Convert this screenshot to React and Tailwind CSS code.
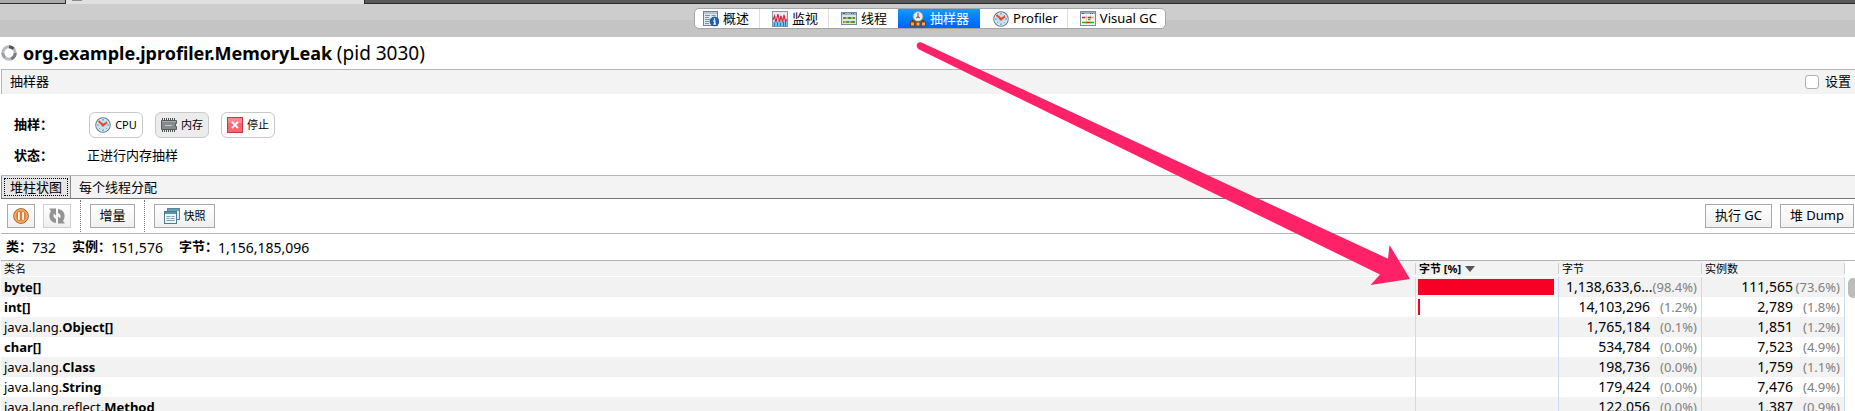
import React from "react";

const FONT = "font-['Noto_Sans','Noto_Sans_CJK_SC',sans-serif]";

function OverviewIcon() {
  return (
    <svg width="16" height="16" viewBox="0 0 16 16" aria-hidden="true">
      <rect x="0.5" y="0.5" width="14" height="14" fill="#dfe9f1" stroke="#6f8290" />
      <rect x="1" y="1" width="13" height="2" fill="#b4c6d4" />
      <path d="M2 4.5h5M8.500 4.500h4M2 6.500h4M2 8.500h5M2 10.500h4M2 12.500h4" stroke="#7c919f" />
      <circle cx="11.500" cy="10.500" r="4.500" fill="#1d5fa8" stroke="#0f4484" strokeWidth="0.6" />
      <path d="M11.500 7.300v1.500M10.300 10h1.500v3M10.300 13.200h2.800" stroke="#fff" strokeWidth="1.300" fill="none" />
    </svg>
  );
}

function MonitorIcon() {
  return (
    <svg width="16" height="16" viewBox="0 0 16 16" aria-hidden="true">
      <rect x="0.5" y="0.5" width="15" height="15" fill="#e6edf2" stroke="#8597a3" />
      <path d="M1 11l2-2 2 2 2-3 2 3 2-2 2 2 2-2v6H1z" fill="#6cc4ee" />
      <path d="M1 9l1.500-4 1.500 6 2-8 1.500 8 1.500-6 1.500 6 1.500-7 1.500 7 1.500-3" fill="none" stroke="#e02844" strokeWidth="1.200" />
      <path d="M2.500 15v-3M5.500 15v-4M8.500 15v-3M11.500 15v-4M13.500 15v-3" stroke="#1d7fb8" />
    </svg>
  );
}

function ThreadsIcon({ visual = false }) {
  return (
    <svg width="16" height="16" viewBox="0 0 16 16" aria-hidden="true">
      <rect x="0.5" y={visual ? 0.5 : 1.5} width="15" height={visual ? 14 : 12} fill={visual ? "#f7f8f3" : "#dce6e8"} stroke="#778c98" />
      <rect x="1" y={visual ? 1 : 2} width="14" height="2" fill="#9db1bf" />
      <path d="M2 2.500h2M10 2.500h1M12 2.500h1" stroke="#49606f" />
      {visual ? (
        <>
          <path d="M2 6.500h12M2 11.500h12M6.500 4v9M10.500 4v9" stroke="#d3d8cc" />
          <path d="M2 6.500h3M8 6.500h3M6 11.500h4" stroke="#d6202c" strokeWidth="1.300" />
          <path d="M5 6.500h3M11 6.500h3" stroke="#efc21d" strokeWidth="1.300" />
          <path d="M2 11.500h4M10 11.500h4M8 8.500h2" stroke="#18bb22" strokeWidth="1.500" />
        </>
      ) : (
        <>
          <path d="M2 7h12" stroke="#3c9b4a" strokeWidth="2" />
          <path d="M2 11h12" stroke="#4aa356" strokeWidth="2" />
          <path d="M5 7h2M10 7h2M3 11h2M8 11h2" stroke="#e0a22a" strokeWidth="2" />
          <path d="M8 7h1M12 11h1" stroke="#c8323c" strokeWidth="2" />
        </>
      )}
    </svg>
  );
}

function SamplerIcon() {
  return (
    <svg width="16" height="16" viewBox="0 0 16 16" aria-hidden="true">
      <path d="M8 9v3M2.500 12V9.500h11V12" stroke="#7a3f0c" strokeWidth="1.500" fill="none" />
      <circle cx="8" cy="5.500" r="4.900" fill="#e4f1f8" stroke="#8aa0ae" />
      <path d="M8 2v3.500M8 5.500L6.300 7.200M8 5.500l1.700 1.700" stroke="#c9482f" strokeWidth="1.200" fill="none" />
      <g fill="#f4a963" stroke="#7a3f0c">
        <rect x="0.5" y="11" width="4" height="4" />
        <rect x="6" y="11" width="4" height="4" />
        <rect x="11.500" y="11" width="4" height="4" />
      </g>
    </svg>
  );
}

function ClockIcon() {
  return (
    <svg width="16" height="16" viewBox="0 0 16 16" aria-hidden="true">
      <circle cx="8" cy="8" r="7.200" fill="#bfe3f6" stroke="#667985" strokeWidth="1.200" />
      <circle cx="8" cy="8" r="6.200" fill="none" stroke="#f1f8fc" strokeWidth="0.8" />
      <path d="M8 2v1.500M8 12.500V14M2 8h1.500M12.500 8H14M3.800 12.200l.8-.8M11.400 11.400l.8.8M11.400 4.600l.8-.8" stroke="#486476" strokeWidth="0.900" />
      <path d="M3.500 4L8 8 12 5.500" fill="none" stroke="#f4431f" strokeWidth="1.900" />
      <circle cx="8" cy="8" r="1.600" fill="#f4431f" />
    </svg>
  );
}

function MemoryIcon() {
  return (
    <svg width="16" height="16" viewBox="0 0 16 16" aria-hidden="true">
      <path d="M1.500 1v14M3.500 1v14M5.500 1v14M7.500 1v14M9.500 1v14M11.500 1v14M13.500 1v14" stroke="#4f4f4f" />
      <path d="M.5 3.500h15v3h-1v3h1v3H.5z" fill="#858a8c" stroke="#565b5d" />
      <path d="M1 4.500h14" stroke="#a7acad" />
      <path d="M4 8.500h7" stroke="#c5cacb" />
    </svg>
  );
}

function StopIcon() {
  return (
    <svg width="16" height="16" viewBox="0 0 16 16" aria-hidden="true">
      <rect x="0.5" y="0.5" width="15" height="15" fill="#fb6572" stroke="#c93443" />
      <rect x="1" y="1" width="14" height="5" fill="#fd8791" />
      <path d="M5 5l6 6M11 5l-6 6" stroke="#fff" strokeWidth="1.800" />
    </svg>
  );
}

function PauseIcon() {
  return (
    <svg width="16" height="16" viewBox="0 0 16 16" aria-hidden="true">
      <circle cx="8" cy="8" r="7.400" fill="#f2872a" stroke="#9c5a2a" strokeWidth="0.900" />
      <circle cx="8" cy="8" r="6.200" fill="none" stroke="#fbc48c" />
      <rect x="4.600" y="3.600" width="2.600" height="8.800" rx="0.500" fill="#fff" stroke="#b9651f" strokeWidth="0.700" />
      <rect x="8.800" y="3.600" width="2.600" height="8.800" rx="0.500" fill="#fff" stroke="#b9651f" strokeWidth="0.700" />
    </svg>
  );
}

function RefreshIcon() {
  return (
    <svg width="18" height="16" viewBox="0 0 18 16" aria-hidden="true" fill="#939393">
      <path d="M1 .5h7v7L6 5.800C4.800 8 5.500 10 8 11v4C2 14.500-.5 8.500 3 3z" />
      <path d="M1 .5h7v7L6 5.800C4.800 8 5.500 10 8 11v4C2 14.500-.5 8.500 3 3z" transform="rotate(180 9 8)" />
    </svg>
  );
}

function SnapshotIcon() {
  return (
    <svg width="16" height="16" viewBox="0 0 16 16" aria-hidden="true">
      <rect x="3.500" y="0.500" width="12" height="11" fill="#dcecf3" stroke="#5b8398" />
      <rect x="4" y="1" width="11" height="2" fill="#6c9eb6" />
      <rect x="0.500" y="3.500" width="12" height="12" fill="#edf6fa" stroke="#4f7b92" />
      <rect x="1" y="4" width="11" height="2" fill="#5b93ae" />
      <path d="M2.500 8.500h4M7.500 8.500h3M2.500 10.500h3M6.500 10.500h4M2.500 12.500h8" stroke="#7ba0b2" />
    </svg>
  );
}

function LoadingIcon() {
  return (
    <svg width="16" height="16" viewBox="0 0 16 16" aria-hidden="true" fill="none" strokeWidth="3">
      <circle cx="8" cy="8" r="6.200" stroke="#b9bbc0" />
      <path d="M8 1.800a6.200 6.200 0 0 1 4.500 2" stroke="#4d535d" />
      <path d="M14.200 8a6.200 6.200 0 0 1-4 5.800" stroke="#777c85" />
      <path d="M4 12.700A6.200 6.200 0 0 1 1.800 8" stroke="#9da0a6" />
    </svg>
  );
}

const views = [
  { label: "概述", icon: <OverviewIcon />, box: "pl-2 pr-[10px] border-r border-[#dedede]" },
  { label: "监视", icon: <MonitorIcon />, box: "pl-3 pr-[10px] border-r border-[#dedede]" },
  { label: "线程", icon: <ThreadsIcon />, box: "pl-3 pr-[11px]" },
  { label: "抽样器", icon: <SamplerIcon />, box: "pl-3 pr-[11px] bg-linear-to-b from-[#1a97ff] to-[#0062ff] text-white", selected: true },
  { label: "Profiler", icon: <ClockIcon />, box: "pl-[13px] pr-[9px] border-r border-[#dedede]" },
  { label: "Visual GC", icon: <ThreadsIcon visual />, box: "pl-3 pr-2" },
];

const rows = [
  { pkg: "", name: "byte[]", bar: 136, bytes: "1,138,633,6...", bytesPct: "(98.4%)", count: "111,565", countPct: "(73.6%)", clipped: true },
  { pkg: "", name: "int[]", bar: 2, bytes: "14,103,296", bytesPct: "(1.2%)", count: "2,789", countPct: "(1.8%)" },
  { pkg: "java.lang.", name: "Object[]", bar: 0, bytes: "1,765,184", bytesPct: "(0.1%)", count: "1,851", countPct: "(1.2%)" },
  { pkg: "", name: "char[]", bar: 0, bytes: "534,784", bytesPct: "(0.0%)", count: "7,523", countPct: "(4.9%)" },
  { pkg: "java.lang.", name: "Class", bar: 0, bytes: "198,736", bytesPct: "(0.0%)", count: "1,759", countPct: "(1.1%)" },
  { pkg: "java.lang.", name: "String", bar: 0, bytes: "179,424", bytesPct: "(0.0%)", count: "7,476", countPct: "(4.9%)" },
  { pkg: "java.lang.reflect.", name: "Method", bar: 0, bytes: "122,056", bytesPct: "(0.0%)", count: "1,387", countPct: "(0.9%)" },
];

function RoundButton({ icon, children, pressed }) {
  return (
    <button
      type="button"
      aria-pressed={pressed}
      className={`flex h-[26px] w-[54px] items-center justify-center gap-1 rounded-md border border-[#c9c9c9] text-[11px] whitespace-nowrap ${pressed ? "bg-[#ececec]" : "bg-white"}`}
    >
      {icon}
      {children}
    </button>
  );
}

function ToolButton({ className, children, ...rest }) {
  return (
    <button
      type="button"
      className={`flex h-6 shrink-0 items-center justify-center border bg-linear-to-b from-white to-[#f0f0f0] whitespace-nowrap ${className}`}
      {...rest}
    >
      {children}
    </button>
  );
}

function Stat({ label, value }) {
  return (
    <span className="flex items-center">
      <b>{label}：</b>
      <span className="text-[14px]">{value}</span>
    </span>
  );
}

function NumberCell({ value, percent, clipped }) {
  return (
    <td className="border-r border-[#c9dbf2] p-0">
      <div className="flex justify-end pr-1 leading-5">
        <span className="text-[14px] leading-5">{value}</span>
        <span className={`text-right text-[13px] leading-5 text-[#808080] ${clipped ? "" : "w-[47px]"}`}>{percent}</span>
      </div>
    </td>
  );
}

function HeaderCell({ children, sort, weight }) {
  return (
    <th scope="col" aria-sort={sort} className={`border-b border-white p-0 text-left text-[11px] leading-[15px] ${weight}`}>
      <div className="flex items-center justify-between">
        <span className="flex items-center gap-1 pl-[3px]">{children}</span>
        <span className="h-[11px] border-r border-[#cfcfcf]" />
      </div>
    </th>
  );
}

export default function App() {
  return (
    <div className={`relative flex h-screen flex-col overflow-hidden bg-white text-[13px] text-black ${FONT}`}>
      <div className="flex h-1 shrink-0">
        <div className="w-[66px] border-r border-b border-[#2e2e2e] bg-[#a9a9a9]" />
        <div className="flex w-[298px] bg-[#e0e0e0] pl-1.5">
          <div className="h-px w-2.5 bg-[#8c8c8c]" />
        </div>
        <div className="flex-1 border-b border-l border-[#2b2b2b] bg-[#595959]" />
      </div>

      <header className="flex h-[33px] shrink-0 justify-center bg-linear-to-b from-[#cdcdcd] from-50% to-[#c4c4c4] to-50% pt-1">
        <nav aria-label="视图" className="ml-[5px] flex h-[21px] overflow-hidden rounded-[5px] border border-[#a5a5a5] bg-white">
          {views.map((v) => (
            <button
              key={v.label}
              type="button"
              aria-current={v.selected ? "page" : undefined}
              className={`flex items-center gap-1 leading-[19px] whitespace-nowrap ${v.box}`}
            >
              {v.icon}
              {v.label}
            </button>
          ))}
        </nav>
      </header>

      <div className="flex h-8 shrink-0 items-center gap-1.5 pl-px">
        <LoadingIcon />
        <h1 className="text-[18px] leading-6 whitespace-nowrap">
          <b>org.example.jprofiler.MemoryLeak</b> <span className="text-[19px]">(pid 3030)</span>
        </h1>
      </div>

      <div className="ml-px flex h-[25px] shrink-0 items-center justify-between border-t border-l border-[#b5b5b5] bg-[#f3f3f3] pr-1 pl-2">
        <h2>抽样器</h2>
        <label className="flex items-center gap-1.5">
          <input type="checkbox" className="size-3.5 appearance-none rounded-[3px] border border-[#b0b0b0] bg-white" />
          设置
        </label>
      </div>

      <section className="flex shrink-0 flex-col gap-[7px] pt-[18px] pb-[9px] pl-3.5">
        <div className="flex h-[26px] items-center">
          <span className="w-[75px] font-bold">抽样：</span>
          <div className="flex gap-3">
            <RoundButton icon={<ClockIcon />}>CPU</RoundButton>
            <RoundButton icon={<MemoryIcon />} pressed>内存</RoundButton>
            <RoundButton icon={<StopIcon />}>停止</RoundButton>
          </div>
        </div>
        <div className="flex h-[21px] items-center">
          <span className="w-[73px] font-bold">状态：</span>
          <span>正进行内存抽样</span>
        </div>
      </section>

      <div role="tablist" className="ml-px flex h-6 shrink-0 border-t border-b border-t-[#b5b5b5] border-b-[#757575] bg-[#f3f3f3]">
        <button type="button" role="tab" aria-selected="true" className="flex w-[70px] border-r border-l border-[#8a8a8a] bg-[#e6e6e6] p-0.5">
          <span className="flex flex-1 items-center justify-center border border-dotted border-black leading-4 whitespace-nowrap">堆柱状图</span>
        </button>
        <button type="button" role="tab" aria-selected="false" className="px-2 leading-[22px]">每个线程分配</button>
      </div>

      <div role="toolbar" className="ml-px flex h-[35px] shrink-0 items-center border-b border-[#b5b5b5] pr-px pl-1.5">
        <div className="flex gap-2">
          <ToolButton className="w-7 border-[#a9a9a9]" aria-label="暂停"><PauseIcon /></ToolButton>
          <ToolButton className="w-7 border-[#d0d0d0]" aria-label="刷新" disabled><RefreshIcon /></ToolButton>
        </div>
        <div className="mx-[9px] h-8 border-l border-dotted border-[#777]" />
        <ToolButton className="w-[45px] border-[#a9a9a9]">增量</ToolButton>
        <div className="mx-[9px] h-8 border-l border-dotted border-[#777]" />
        <ToolButton className="w-[61px] gap-1 border-[#a9a9a9] text-[11px]"><SnapshotIcon />快照</ToolButton>
        <div className="ml-auto flex gap-2">
          <ToolButton className="w-[67px] border-[#a9a9a9]">执行 GC</ToolButton>
          <ToolButton className="w-[74px] border-[#a9a9a9]">堆 Dump</ToolButton>
        </div>
      </div>

      <div className="ml-px flex h-[27px] shrink-0 items-center gap-4 border-b border-[#b5b5b5] pl-[5px]">
        <Stat label="类" value="732" />
        <Stat label="实例" value="151,576" />
        <Stat label="字节" value="1,156,185,096" />
      </div>

      <div className="ml-px flex min-h-0 flex-1 overflow-hidden">
        <table className="w-full table-fixed border-separate border-spacing-0 self-start">
          <colgroup>
            <col />
            <col className="w-[143px]" />
            <col className="w-[143px]" />
            <col className="w-[143px]" />
          </colgroup>
          <thead>
            <tr className="bg-[#f3f3f3]">
              <HeaderCell weight="font-normal">类名</HeaderCell>
              <HeaderCell sort="descending" weight="font-bold">
                字节 [%]
                <svg width="10" height="6" viewBox="0 0 10 6" aria-hidden="true"><path d="M0 0h10L5 6z" fill="#555" /></svg>
              </HeaderCell>
              <HeaderCell weight="font-normal">字节</HeaderCell>
              <HeaderCell weight="font-normal">实例数</HeaderCell>
            </tr>
          </thead>
          <tbody>
            {rows.map((r) => (
              <tr key={r.name} className="h-5 leading-5 odd:bg-[#f2f2f2]">
                <td className="truncate border-r border-[#c9dbf2] py-0 pr-0 pl-[3px]">{r.pkg}<b>{r.name}</b></td>
                <td className="border-r border-[#c9dbf2] py-0 pr-0 pl-0.5">
                  <div className="h-4 bg-[#f70025]" style={{ width: r.bar }} />
                </td>
                <NumberCell value={r.bytes} percent={r.bytesPct} clipped={r.clipped} />
                <NumberCell value={r.count} percent={r.countPct} />
              </tr>
            ))}
          </tbody>
        </table>
        <div className="w-2.5 shrink-0 overflow-hidden bg-white pt-[17px] pl-[3px]">
          <div className="h-5 w-2.5 rounded-full bg-[#bcbcbc]" />
        </div>
      </div>

      <svg className="pointer-events-none absolute top-[40px] left-[914px]" width="500" height="250" viewBox="914 40 500 250" aria-hidden="true">
        <path d="M922 42.700L1388 258.700L1389.500 245L1410 279L1370.500 285L1380 274.500L919 49.500C914.500 46.500 917 40.500 922 42.700Z" fill="#ff2268" />
      </svg>
    </div>
  );
}
